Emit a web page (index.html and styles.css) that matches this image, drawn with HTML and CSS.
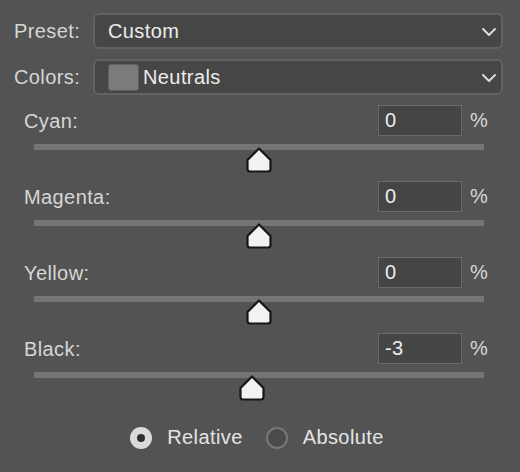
FILE: index.html
```html
<!DOCTYPE html>
<html>
<head>
<meta charset="utf-8">
<link rel="stylesheet" href="styles.css">
</head>
<body>
<div class="panel">
  <div class="field">
    <span class="flabel">Preset:</span>
    <div class="select">
      <span class="stext">Custom</span>
      <svg class="chev" width="16" height="10" viewBox="0 0 16 10"><path d="M2 2 L8 8 L14 2" fill="none" stroke="#dcdcdc" stroke-width="2" stroke-linecap="round" stroke-linejoin="round"/></svg>
    </div>
  </div>
  <div class="field">
    <span class="flabel">Colors:</span>
    <div class="select">
      <span class="swatch"></span>
      <span class="stext tight">Neutrals</span>
      <svg class="chev" width="16" height="10" viewBox="0 0 16 10"><path d="M2 2 L8 8 L14 2" fill="none" stroke="#dcdcdc" stroke-width="2" stroke-linecap="round" stroke-linejoin="round"/></svg>
    </div>
  </div>

  <div class="sliders">
    <div class="slider">
      <div class="srow"><span class="slabel">Cyan:</span><div class="num">0</div><span class="pct">%</span></div>
      <div class="track"><svg class="thumb" style="left:50%" width="26" height="26" viewBox="0 0 26 26"><path d="M13 1.5 L24.5 13 L24.5 22 Q24.5 24.5 22 24.5 L4 24.5 Q1.5 24.5 1.5 22 L1.5 13 Z" fill="#f2f2f2" stroke="#161616" stroke-width="2.2" stroke-linejoin="round"/></svg></div>
    </div>
    <div class="slider">
      <div class="srow"><span class="slabel">Magenta:</span><div class="num">0</div><span class="pct">%</span></div>
      <div class="track"><svg class="thumb" style="left:50%" width="26" height="26" viewBox="0 0 26 26"><path d="M13 1.5 L24.5 13 L24.5 22 Q24.5 24.5 22 24.5 L4 24.5 Q1.5 24.5 1.5 22 L1.5 13 Z" fill="#f2f2f2" stroke="#161616" stroke-width="2.2" stroke-linejoin="round"/></svg></div>
    </div>
    <div class="slider">
      <div class="srow"><span class="slabel">Yellow:</span><div class="num">0</div><span class="pct">%</span></div>
      <div class="track"><svg class="thumb" style="left:50%" width="26" height="26" viewBox="0 0 26 26"><path d="M13 1.5 L24.5 13 L24.5 22 Q24.5 24.5 22 24.5 L4 24.5 Q1.5 24.5 1.5 22 L1.5 13 Z" fill="#f2f2f2" stroke="#161616" stroke-width="2.2" stroke-linejoin="round"/></svg></div>
    </div>
    <div class="slider">
      <div class="srow"><span class="slabel">Black:</span><div class="num">-3</div><span class="pct">%</span></div>
      <div class="track"><svg class="thumb" style="left:48.5%" width="26" height="26" viewBox="0 0 26 26"><path d="M13 1.5 L24.5 13 L24.5 22 Q24.5 24.5 22 24.5 L4 24.5 Q1.5 24.5 1.5 22 L1.5 13 Z" fill="#f2f2f2" stroke="#161616" stroke-width="2.2" stroke-linejoin="round"/></svg></div>
    </div>
  </div>

  <div class="radios">
    <label class="radio"><span class="rdot on"></span><span class="rtext">Relative</span></label>
    <label class="radio"><span class="rdot"></span><span class="rtext">Absolute</span></label>
  </div>
</div>
</body>
</html>
```

FILE: styles.css
```css
html, body {
  margin: 0;
  padding: 0;
  background: #535353;
}
body {
  width: 520px;
  height: 472px;
  overflow: hidden;
  font-family: "Liberation Sans", Arial, sans-serif;
  letter-spacing: 0.4px;
  color: #d8d8d8;
}
.panel {
  padding-top: 13px;
}
.field {
  display: flex;
  align-items: center;
  height: 36px;
  padding-left: 14px;
  padding-right: 17px;
  margin-bottom: 10px;
}
.flabel {
  width: 79px;
  font-size: 20px;
  color: #d6d6d6;
}
.select {
  flex: 1;
  height: 36px;
  box-sizing: border-box;
  border: 2px solid #626262;
  border-radius: 6px;
  background: #464646;
  display: flex;
  align-items: center;
  padding-left: 13px;
  padding-right: 4px;
}
.stext {
  flex: 1;
  font-size: 20px;
  color: #ececec;
}
.stext.tight {
  margin-left: 4px;
}
.swatch {
  width: 31px;
  height: 27px;
  box-sizing: border-box;
  background: #7b7b7b;
  border: 1px solid #5f5f5f;
  border-radius: 3px;
}
.chev {
  margin-top: 2px;
}
.slider {
  height: 76px;
  padding-left: 24px;
}
.srow {
  display: flex;
  align-items: center;
  height: 31px;
}
.slabel {
  flex: 1;
  font-size: 20px;
  color: #d6d6d6;
  position: relative;
  top: 1px;
}
.num {
  width: 84px;
  height: 31px;
  box-sizing: border-box;
  border: 1px solid #6a6a6a;
  background: #454545;
  font-size: 20px;
  color: #ececec;
  padding-left: 6px;
  line-height: 29px;
}
.pct {
  width: 17px;
  margin-left: 8px;
  margin-right: 33px;
  font-size: 20px;
  color: #d8d8d8;
}
.track {
  position: relative;
  margin-top: 8px;
  margin-left: 10px;
  width: 450px;
  height: 6px;
  background: #757575;
}
.thumb {
  position: absolute;
  top: 3px;
  margin-left: -13px;
  display: block;
}
.radios {
  margin-top: 17px;
  display: flex;
  justify-content: center;
  align-items: center;
  padding-right: 6px;
  gap: 23px;
}
.radio {
  display: flex;
  align-items: center;
  gap: 15px;
}
.rdot {
  width: 22px;
  height: 22px;
  box-sizing: border-box;
  border-radius: 50%;
  border: 2px solid #777;
  background: #4a4a4a;
  display: flex;
  align-items: center;
  justify-content: center;
}
.rdot.on {
  border: none;
  background: #dadada;
}
.rdot.on::after {
  content: "";
  width: 8px;
  height: 8px;
  border-radius: 50%;
  background: #2e2e2e;
}
.rtext {
  font-size: 20px;
  color: #e4e4e4;
}
```
